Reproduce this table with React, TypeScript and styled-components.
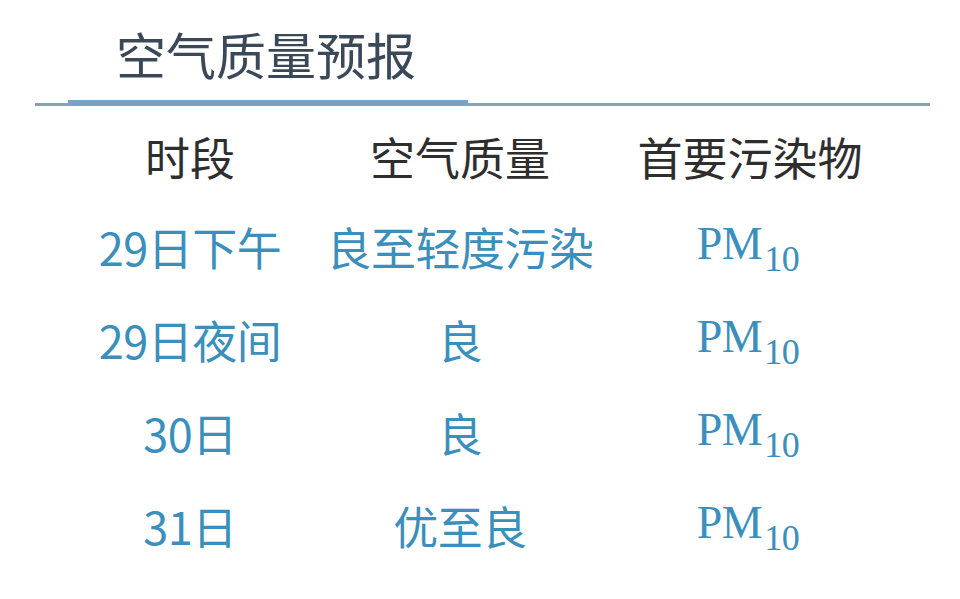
import React from 'react'
import styled, { createGlobalStyle } from 'styled-components'

const GlobalStyle = createGlobalStyle`
  html, body {
    margin: 0;
    padding: 0;
    background: #ffffff;
  }
  body {
    font-family: 'Noto Sans CJK SC', 'Noto Sans', sans-serif;
  }
`

interface Row {
  period: string
  quality: string
  pollutant: string
  sub: string
}

const rows: Row[] = [
  { period: '29日下午', quality: '良至轻度污染', pollutant: 'PM', sub: '10' },
  { period: '29日夜间', quality: '良', pollutant: 'PM', sub: '10' },
  { period: '30日', quality: '良', pollutant: 'PM', sub: '10' },
  { period: '31日', quality: '优至良', pollutant: 'PM', sub: '10' }
]

const Page = styled.div`
  width: 960px;
  height: 599px;
  overflow: hidden;
  background: #ffffff;
`

const Title = styled.h1`
  margin: 0;
  padding: 28px 0 0 116px;
  height: 72px;
  box-sizing: border-box;
  font-size: 50px;
  font-weight: 400;
  line-height: 50px;
  color: #3a4858;
`

// thin rule with the thicker accent segment on top of its left part
const Rule = styled.div`
  margin: 28px 30px 0 35px;
  height: 6px;
  display: flex;
  align-items: flex-end;
  background: linear-gradient(to bottom, transparent 3px, #87a2ad 3px);
`

const Accent = styled.div`
  margin-left: 33px;
  width: 400px;
  height: 6px;
  background: #7aa2c6;
`

const Table = styled.div`
  display: grid;
  grid-template-columns: 260px 280px 300px;
  grid-template-rows: 88px;
  grid-auto-rows: 93px;
  padding: 6px 0 0 60px;
`

const Cell = styled.div<{ $head?: boolean }>`
  display: flex;
  align-items: center;
  justify-content: center;
  font-size: 45px;
  line-height: 1;
  white-space: nowrap;
  color: ${(p) => (p.$head ? '#2e2e2e' : '#3b8fbd')};
  letter-spacing: ${(p) => (p.$head ? '0' : '-0.5px')};
`

const Pollutant = styled.span`
  font-family: 'Liberation Serif', 'DejaVu Serif', serif;
  font-size: 46px;
  color: #3b8fbd;
  position: relative;
  top: -3px;
  left: -2px;
`

const Sub = styled.sub`
  font-size: 36px;
  vertical-align: -12px;
  line-height: 0;
  margin-left: 2px;
`

export default function App() {
  return (
    <Page>
      <GlobalStyle />
      <Title>空气质量预报</Title>
      <Rule>
        <Accent />
      </Rule>
      <Table>
        <Cell $head>时段</Cell>
        <Cell $head>空气质量</Cell>
        <Cell $head>首要污染物</Cell>
        {rows.map((r) => (
          <React.Fragment key={r.period}>
            <Cell>{r.period}</Cell>
            <Cell>{r.quality}</Cell>
            <Cell>
              <Pollutant>
                {r.pollutant}
                <Sub>{r.sub}</Sub>
              </Pollutant>
            </Cell>
          </React.Fragment>
        ))}
      </Table>
    </Page>
  )
}
